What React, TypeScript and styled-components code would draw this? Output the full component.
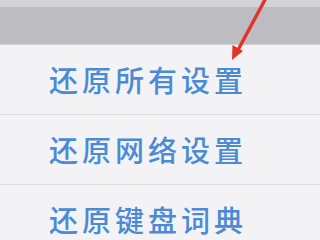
import React from 'react';
import styled, { createGlobalStyle } from 'styled-components';

const GlobalStyle = createGlobalStyle`
  html, body {
    margin: 0;
    padding: 0;
    background: #f3f3f5;
  }
  body {
    width: 320px;
    height: 240px;
    overflow: hidden;
    font-family: "Noto Sans CJK SC", "Noto Sans", sans-serif;
  }
`;

const items = ['还原所有设置', '还原网络设置', '还原键盘词典'];

const App: React.FC = () => {
  return (
    <>
      <GlobalStyle />
      <StyledScreen>
        <StyledHeader>
          <StyledHeaderTop />
        </StyledHeader>
        <StyledList>
          {items.map((label) => (
            <StyledRow key={label}>
              <StyledLabel>{label}</StyledLabel>
            </StyledRow>
          ))}
        </StyledList>
        <StyledArrow width="320" height="70" viewBox="0 0 320 70">
          <line x1="267" y1="-4" x2="238" y2="50" stroke="#e3322b" strokeWidth="3.4" strokeLinecap="round" />
          <polygon points="232,60 232.5,45 243,51" fill="#e3322b" />
        </StyledArrow>
      </StyledScreen>
    </>
  );
};

export default App;

// Style Tags
const StyledScreen = styled.div`
  position: relative;
  width: 320px;
  height: 240px;
  overflow: hidden;
  background: #f3f3f5;
`;

const StyledHeader = styled.div`
  height: 44px;
  background: #bdbdc1;
  border-bottom: 1px solid #d0d0d3;
`;

const StyledHeaderTop = styled.div`
  height: 7px;
  background: #d3d3d6;
`;

const StyledList = styled.div`
  display: flex;
  flex-direction: column;
`;

const StyledRow = styled.div`
  height: 69px;
  display: flex;
  align-items: center;
  padding-left: 49px;
  border-bottom: 1px solid #dcdcdf;
  box-sizing: content-box;
`;

const StyledLabel = styled.span`
  font-size: 29px;
  font-weight: 500;
  letter-spacing: 4px;
  color: #4a8ad6;
  line-height: 1;
`;

const StyledArrow = styled.svg`
  position: absolute;
  left: 0;
  top: 0;
`;
